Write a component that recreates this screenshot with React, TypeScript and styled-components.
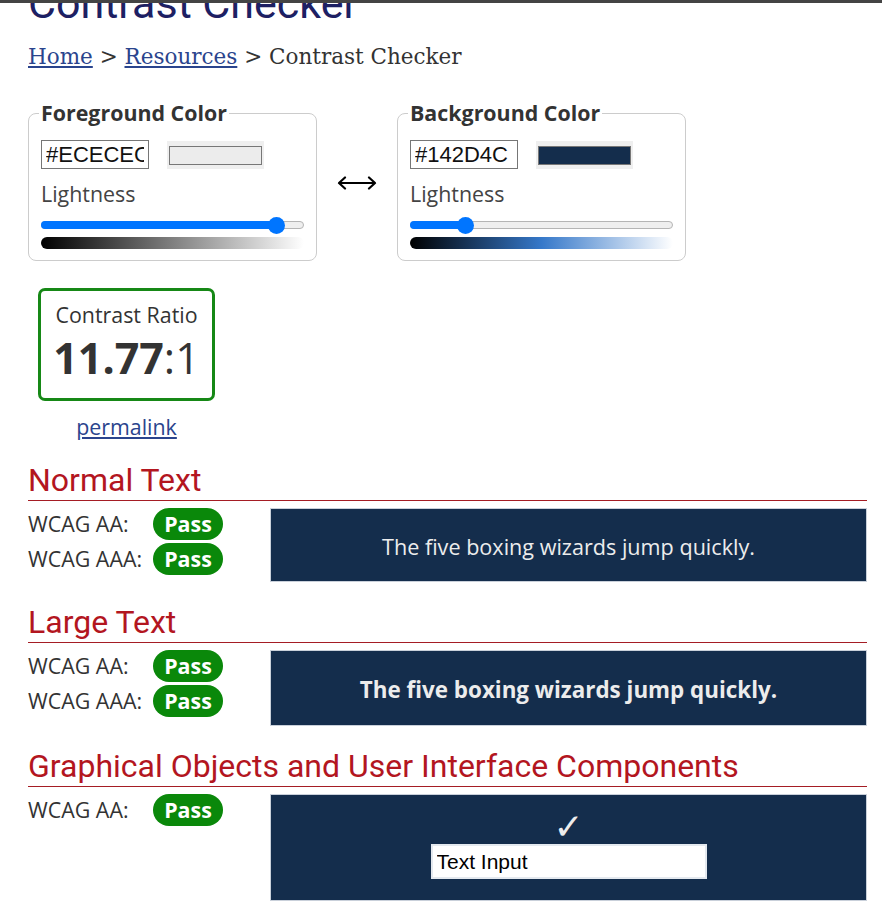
import React from 'react';
import styled, { createGlobalStyle } from 'styled-components';

const GlobalStyle = createGlobalStyle`
  html, body {
    margin: 0;
    padding: 0;
    background: #fff;
  }
  body {
    font-family: 'Open Sans', 'DejaVu Sans', sans-serif;
    color: #333;
  }
`;

const TopBar = styled.div`
  height: 3px;
  background: #444;
`;

const Page = styled.main`
  overflow: hidden;
  padding: 0 15px 20px 28px;
`;

const Title = styled.h1`
  margin: -24px 0 0;
  font-family: Roboto, 'Liberation Sans', sans-serif;
  font-weight: 400;
  font-size: 43px;
  line-height: 48px;
  color: #1d2063;
`;

const Breadcrumb = styled.nav`
  margin-top: 18px;
  font-family: 'DejaVu Serif', 'Liberation Serif', serif;
  font-size: 21.5px;
  line-height: 24px;
  color: #333;

  a {
    color: #2a448d;
    text-decoration: underline;
  }
`;

const PickerRow = styled.div`
  display: flex;
  align-items: flex-start;
  margin-top: 30px;
`;

const ColorFieldset = styled.fieldset`
  width: 289px;
  min-width: 0;
  box-sizing: border-box;
  margin: 0;
  padding: 13px 12px 11px;
  border: 1px solid #ccc;
  border-radius: 8px;
`;

const Legend = styled.legend`
  margin-left: -2px;
  padding: 0 2px;
  font-weight: 700;
  font-size: 21.4px;
  line-height: 28px;
  color: #333;
`;

const InputRow = styled.div`
  display: flex;
  align-items: center;
  gap: 18px;
  height: 29px;
`;

const HexInput = styled.input`
  width: 108px;
  height: 29px;
  box-sizing: border-box;
  margin: 0;
  padding: 0 4px;
  border: 1px solid #767676;
  font-family: 'Liberation Sans', Arial, sans-serif;
  font-size: 22px;
  color: #111;
  background: #fff;
  outline: none;
`;

const Swatch = styled.div`
  width: 97px;
  height: 28px;
  box-sizing: border-box;
  padding: 5px 2px 4px;
  background: #efefef;
`;

const SwatchColor = styled.div<{ $color: string }>`
  height: 100%;
  box-sizing: border-box;
  border: 1px solid #777;
  background: ${(p) => p.$color};
`;

const FieldLabel = styled.div`
  margin-top: 11px;
  font-size: 21.4px;
  line-height: 28px;
  color: #444;
`;

const Slider = styled.div`
  display: flex;
  align-items: center;
  height: 18px;
  margin-top: 8px;
`;

const Track = styled.div`
  position: relative;
  flex: 1;
  height: 8px;
  box-sizing: border-box;
  border: 1px solid #b5b5b5;
  border-radius: 4px;
  background: #efefef;
`;

const TrackFill = styled.div`
  height: 8px;
  margin: -1px 0 0 -1px;
  border-radius: 4px 0 0 4px;
  background: #0075ff;
`;

const Thumb = styled.div`
  position: absolute;
  top: 50%;
  width: 17px;
  height: 17px;
  margin: -8.5px 0 0 -8.5px;
  border-radius: 50%;
  background: #0075ff;
`;

const GradientBar = styled.div<{ $gradient: string }>`
  height: 12px;
  margin-top: 3px;
  border-radius: 6px;
  background: ${(p) => p.$gradient};
`;

const ArrowCell = styled.div`
  display: flex;
  justify-content: center;
  width: 80px;
  padding-top: 77px;
`;

const RatioWrap = styled.div`
  width: 177px;
  margin: 27px 0 0 10px;
  text-align: center;
`;

const RatioBox = styled.div`
  box-sizing: border-box;
  padding: 10px 0 14px;
  border: 3px solid #168816;
  border-radius: 7px;
`;

const RatioLabel = styled.div`
  font-size: 21.4px;
  line-height: 28px;
  color: #333;
`;

const RatioValue = styled.div`
  margin-top: 3px;
  font-size: 43px;
  line-height: 52px;
  color: #333;

  strong {
    font-weight: 700;
  }
`;

const Permalink = styled.a`
  display: inline-block;
  margin-top: 12px;
  font-size: 21.4px;
  line-height: 28px;
  color: #2a448d;
  text-decoration: underline;
`;

const Section = styled.section<{ $first?: boolean }>`
  margin-top: ${(p) => (p.$first ? 19 : 20)}px;
`;

const SectionTitle = styled.h2`
  margin: 0 0 7px;
  padding: 0;
  font-family: Roboto, 'Liberation Sans', sans-serif;
  font-weight: 400;
  font-size: 32px;
  line-height: 40px;
  color: #b3161f;
  border-bottom: 1px solid #a51d24;
`;

const ResultGrid = styled.div`
  display: grid;
  grid-template-columns: 242px 1fr;
`;

const Checks = styled.div`
  display: flex;
  flex-direction: column;
  gap: 3px;
`;

const CheckRow = styled.div`
  display: flex;
  align-items: center;
  height: 32px;
`;

const CheckLabel = styled.span`
  width: 125px;
  font-size: 21.4px;
  line-height: 32px;
  color: #333;
`;

const PassBadge = styled.span`
  width: 70px;
  height: 32px;
  border-radius: 16px;
  background: #0a880a;
  color: #fff;
  font-weight: 700;
  font-size: 21.4px;
  line-height: 32px;
  text-align: center;
`;

const Sample = styled.div<{ $height: number; $bold?: boolean }>`
  display: flex;
  align-items: center;
  justify-content: center;
  height: ${(p) => p.$height}px;
  box-sizing: border-box;
  padding-top: 2px;
  border: 1px solid #c9d0da;
  background: #142d4c;
  color: #ececec;
  font-size: ${(p) => (p.$bold ? 22.4 : 21.6)}px;
  font-weight: ${(p) => (p.$bold ? 700 : 400)};
`;

const GraphicSample = styled.div`
  display: flex;
  flex-direction: column;
  align-items: center;
  height: 107px;
  box-sizing: border-box;
  padding-top: 17px;
  border: 1px solid #c9d0da;
  background: #142d4c;
`;

const CheckMark = styled.span`
  font-family: 'DejaVu Sans', sans-serif;
  font-size: 36px;
  line-height: 30px;
  height: 30px;
  color: #ececec;
`;

const DemoInput = styled.input`
  width: 276px;
  height: 35px;
  box-sizing: border-box;
  margin: 2px 0 0;
  padding: 0 4px;
  border: 2px solid #e4e9ef;
  background: #fff;
  font-family: 'Liberation Sans', Arial, sans-serif;
  font-size: 21px;
  color: #000;
  outline: none;
`;

interface PickerProps {
  legend: string;
  hex: string;
  lightness: number;
  gradient: string;
}

function ColorPicker ({ legend, hex, lightness, gradient }: PickerProps) {
  const pos = `calc(8.5px + (100% - 17px) * ${lightness})`;

  return (
    <ColorFieldset>
      <Legend>{legend}</Legend>
      <InputRow>
        <HexInput readOnly value={hex} />
        <Swatch>
          <SwatchColor $color={hex} />
        </Swatch>
      </InputRow>
      <FieldLabel>Lightness</FieldLabel>
      <Slider>
        <Track>
          <TrackFill style={{ width: pos }} />
          <Thumb style={{ left: pos }} />
        </Track>
      </Slider>
      <GradientBar $gradient={gradient} />
    </ColorFieldset>
  );
}

function Checklist ({ levels }: { levels: string[] }) {
  return (
    <Checks>
      {levels.map((level) => (
        <CheckRow key={level}>
          <CheckLabel>{level}:</CheckLabel>
          <PassBadge>Pass</PassBadge>
        </CheckRow>
      ))}
    </Checks>
  );
}

const SENTENCE = 'The five boxing wizards jump quickly.';

export default function App () {
  return (
    <>
      <GlobalStyle />
      <TopBar />
      <Page>
        <Title>Contrast Checker</Title>
        <Breadcrumb>
          <a href='#home'>Home</a> &gt; <a href='#resources'>Resources</a> &gt; Contrast Checker
        </Breadcrumb>

        <PickerRow>
          <ColorPicker
            legend='Foreground Color'
            hex='#ECECEC'
            lightness={0.925}
            gradient='linear-gradient(to right, #000, #fff)'
          />
          <ArrowCell>
            <svg width='40' height='14' viewBox='0 0 40 14' fill='none' stroke='#000' strokeWidth='2.2'>
              <path d='M2 7h36' />
              <path d='M8 1.5L2 7l6 5.5M32 1.5L38 7l-6 5.5' strokeLinecap='round' strokeLinejoin='round' />
            </svg>
          </ArrowCell>
          <ColorPicker
            legend='Background Color'
            hex='#142D4C'
            lightness={0.188}
            gradient='linear-gradient(to right, hsl(213, 58%, 0%), hsl(213, 58%, 50%), hsl(213, 58%, 100%))'
          />
        </PickerRow>

        <RatioWrap>
          <RatioBox>
            <RatioLabel>Contrast Ratio</RatioLabel>
            <RatioValue><strong>11.77</strong>:1</RatioValue>
          </RatioBox>
          <Permalink href='#permalink'>permalink</Permalink>
        </RatioWrap>

        <Section $first>
          <SectionTitle>Normal Text</SectionTitle>
          <ResultGrid>
            <Checklist levels={['WCAG AA', 'WCAG AAA']} />
            <Sample $height={74}>{SENTENCE}</Sample>
          </ResultGrid>
        </Section>

        <Section>
          <SectionTitle>Large Text</SectionTitle>
          <ResultGrid>
            <Checklist levels={['WCAG AA', 'WCAG AAA']} />
            <Sample $height={76} $bold>{SENTENCE}</Sample>
          </ResultGrid>
        </Section>

        <Section>
          <SectionTitle>Graphical Objects and User Interface Components</SectionTitle>
          <ResultGrid>
            <Checklist levels={['WCAG AA']} />
            <GraphicSample>
              <CheckMark>✓</CheckMark>
              <DemoInput readOnly value='Text Input' />
            </GraphicSample>
          </ResultGrid>
        </Section>
      </Page>
    </>
  );
}
